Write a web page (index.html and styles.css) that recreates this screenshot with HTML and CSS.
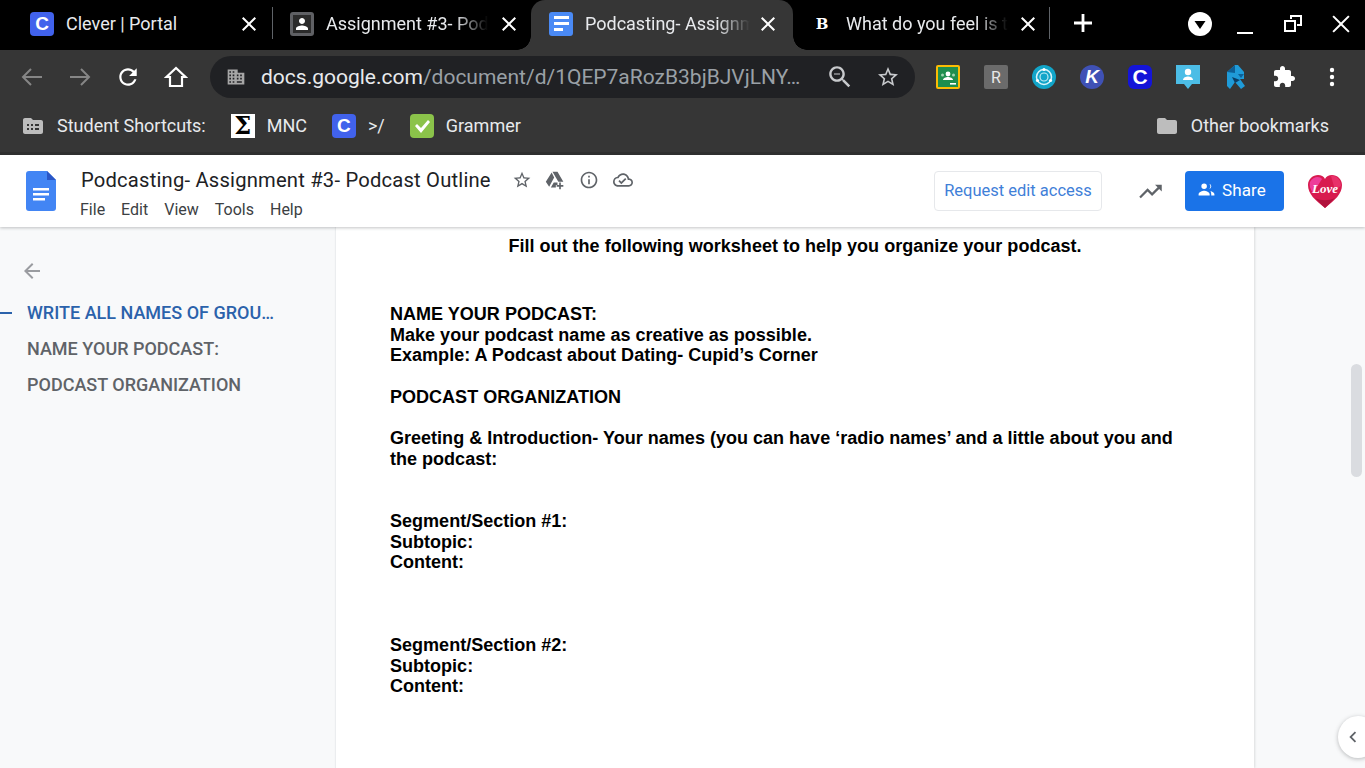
FILE: index.html
```html
<!DOCTYPE html>
<html lang="en">
<head>
<meta charset="utf-8">
<title>Podcasting- Assignment #3- Podcast Outline</title>
<link rel="stylesheet" href="styles.css">
</head>
<body>
<svg class="defs" aria-hidden="true">
  <symbol id="i-close" viewBox="0 0 24 24"><path d="M19 6.41L17.59 5 12 10.59 6.41 5 5 6.41 10.59 12 5 17.59 6.41 19 12 13.41 17.59 19 19 17.59 13.41 12z"/></symbol>
  <symbol id="i-star" viewBox="0 0 24 24"><path d="M22 9.24l-7.19-.62L12 2 9.19 8.63 2 9.24l5.46 4.73L5.82 21 12 17.27 18.18 21l-1.63-7.03L22 9.24zM12 15.4l-3.76 2.27 1-4.28-3.32-2.88 4.38-.38L12 6.1l1.71 4.04 4.38.38-3.32 2.88 1 4.28L12 15.4z"/></symbol>
  <symbol id="i-folder" viewBox="0 0 24 24"><path d="M10 4H4c-1.1 0-1.99.9-1.99 2L2 18c0 1.1.9 2 2 2h16c1.1 0 2-.9 2-2V8c0-1.1-.9-2-2-2h-8l-2-2z"/></symbol>
  <symbol id="i-person" viewBox="0 0 24 24"><path d="M12 12c2.21 0 4-1.79 4-4s-1.79-4-4-4-4 1.79-4 4 1.79 4 4 4zm0 2c-2.67 0-8 1.34-8 4v2h16v-2c0-2.66-5.33-4-8-4z"/></symbol>
</svg>

<div class="tabstrip">
  <div class="tab tab-one">
    <span class="fav fav-clever">C</span>
    <span class="tab-title">Clever | Portal</span>
    <svg class="tab-x"><use href="#i-close"/></svg>
  </div>
  <i class="tab-sep"></i>
  <div class="tab tab-two">
    <span class="fav fav-class"><svg viewBox="0 0 24 24"><use href="#i-person"/></svg></span>
    <span class="tab-title fade">Assignment #3- Podcast Outline</span>
    <svg class="tab-x"><use href="#i-close"/></svg>
  </div>
  <div class="tab tab-active">
    <span class="fav fav-docs"><i></i><i></i><i class="short"></i></span>
    <span class="tab-title fade">Podcasting- Assignment #3</span>
    <svg class="tab-x"><use href="#i-close"/></svg>
  </div>
  <div class="tab tab-four">
    <span class="fav fav-b">B</span>
    <span class="tab-title fade">What do you feel is the best</span>
    <svg class="tab-x"><use href="#i-close"/></svg>
  </div>
  <i class="tab-sep"></i>
  <svg class="newtab" viewBox="0 0 24 24"><path d="M10.6 3h2.8v7.6H21v2.8h-7.6V21h-2.8v-7.6H3v-2.8h7.6z"/></svg>
  <div class="winctl">
    <svg class="win-drop" viewBox="0 0 24 24"><circle cx="12" cy="12" r="12" fill="#fff"/><path d="M6.500 9h11L12 17z" fill="#000"/></svg>
    <svg class="win-btn" viewBox="0 0 24 24"><path d="M4 20h16v2H4z" fill="#fff"/></svg>
    <svg class="win-btn" viewBox="0 0 24 24"><path d="M9 3h12v11h-5v-2h3V5h-8v2H9zM3 8h12v12H3zm2 2v8h8v-8z" fill="#fff" fill-rule="evenodd"/></svg>
    <svg class="win-btn" viewBox="0 0 24 24"><path d="M20.600 4.800 19.200 3.400 12 10.600 4.800 3.400 3.400 4.800l7.200 7.200-7.200 7.200 1.400 1.400 7.200-7.200 7.200 7.200 1.400-1.400-7.200-7.200z" fill="#fff"/></svg>
  </div>
</div>

<div class="toolbar">
  <svg class="nav line dim" viewBox="0 0 24 24"><path d="M22 12H3M11 4l-8 8 8 8"/></svg>
  <svg class="nav line dim" viewBox="0 0 24 24"><path d="M2 12h19M13 4l8 8-8 8"/></svg>
  <svg class="nav" viewBox="1 1 22 22"><path d="M17.650 6.350C16.200 4.900 14.210 4 12 4c-4.420 0-7.990 3.580-7.990 8s3.570 8 7.990 8c3.730 0 6.840-2.550 7.730-6h-2.080c-.82 2.330-3.040 4-5.650 4-3.310 0-6-2.690-6-6s2.690-6 6-6c1.660 0 3.140.69 4.220 1.780L13 11h7V4l-2.350 2.350z"/></svg>
  <svg class="nav line home" viewBox="0 0 24 24"><path d="M12 3 2.500 12H6v9h12v-9h3.500z"/></svg>
  <div class="omnibox">
    <svg class="site" viewBox="0 0 24 24"><path d="M2 3h12v4h8v14H2zm2 2v2h2V5zm4 0v2h2V5zM4 9v2h2V9zm4 0v2h2V9zM4 13v2h2v-2zm4 0v2h2v-2zM4 17v2h2v-2zm4 0v2h2v-2zm5-8v2h2V9zm4 0v2h2V9zm-4 4v2h2v-2zm4 0v2h2v-2zm-4 4v2h6v-2z" fill-rule="evenodd"/></svg>
    <span class="url"><b>docs.google.com</b>/document/d/1QEP7aRozB3bjBJVjLNY…</span>
    <svg class="omni-ic" viewBox="2 2 20 20"><path d="M15.500 14h-.79l-.28-.27C15.410 12.590 16 11.110 16 9.500 16 5.910 13.090 3 9.500 3S3 5.910 3 9.500 5.910 16 9.500 16c1.610 0 3.090-.59 4.230-1.570l.27.28v.79l5 4.990L20.490 19l-4.990-5zm-6 0C7.010 14 5 11.990 5 9.500S7.010 5 9.500 5 14 7.010 14 9.500 11.990 14 9.500 14zM7 9h5v1H7z"/></svg>
    <svg class="omni-ic"><use href="#i-star"/></svg>
  </div>
  <div class="exts">
    <svg class="ext" viewBox="0 0 24 24"><rect width="24" height="24" rx="2" fill="#fbbc04"/><rect x="2" y="2" width="20" height="20" fill="#1e8e4e"/><circle cx="12" cy="9" r="2.400" fill="#fff"/><circle cx="6.500" cy="10" r="1.500" fill="#9fd4b0"/><circle cx="17.500" cy="10" r="1.500" fill="#9fd4b0"/><path d="M7 15c0-2 3-3 5-3s5 1 5 3z" fill="#fff"/><path d="M14 18h6v1.600h-6z" fill="#fff"/></svg>
    <span class="ext ext-r">R</span>
    <svg class="ext" viewBox="0 0 24 24"><circle cx="12" cy="12" r="12" fill="#12a5c9"/><circle cx="12" cy="12" r="7.500" fill="none" stroke="#d9f4fa" stroke-width="1.500"/><circle cx="12" cy="12" r="4" fill="none" stroke="#bfeaf4" stroke-width="1.200"/><circle cx="12" cy="4.500" r="1.600" fill="#fff"/><circle cx="5.500" cy="15.500" r="1.600" fill="#fff"/><circle cx="18.500" cy="15.500" r="1.600" fill="#fff"/></svg>
    <span class="ext ext-k">K</span>
    <span class="ext ext-c">C</span>
    <svg class="ext" viewBox="0 0 24 24"><path d="M0 0h24v19h-8l-4 5-4-5H0z" fill="#4cbde6"/><circle cx="12" cy="7" r="3.200" fill="#fff"/><path d="M7 15c0-2.600 3-3.600 5-3.600s5 1 5 3.600z" fill="#fff"/></svg>
    <svg class="ext" viewBox="0 0 24 24"><path d="M11 0h3l6 7v7l-4 0 5 7-4 3-6-7-5 7-3-3V7z" fill="#1f9bd8"/><path d="M3 7l8-7 0 8zM14 9l6 0-3 4z" fill="#0d5f96"/><path d="M8 12l8 3-5 3z" fill="#0a3e66"/></svg>
    <svg class="ext ext-tool" viewBox="0 0 24 24"><path d="M20.500 11H19V7c0-1.100-.9-2-2-2h-4V3.500C13 2.120 11.880 1 10.500 1S8 2.120 8 3.500V5H4c-1.100 0-1.990.9-1.990 2v3.800H3.500c1.490 0 2.700 1.210 2.700 2.700s-1.210 2.700-2.700 2.700H2V20c0 1.100.9 2 2 2h3.800v-1.500c0-1.490 1.210-2.700 2.700-2.700 1.490 0 2.700 1.210 2.700 2.700V22H17c1.100 0 2-.9 2-2v-4h1.500c1.380 0 2.500-1.120 2.500-2.500S21.880 11 20.500 11z"/></svg>
    <svg class="ext ext-tool" viewBox="0 0 24 24"><circle cx="12" cy="5" r="2.200"/><circle cx="12" cy="12" r="2.200"/><circle cx="12" cy="19" r="2.200"/></svg>
  </div>
</div>

<div class="bookmarks">
  <div class="bm">
    <svg class="bm-ic" viewBox="0 0 24 24"><path d="M10 4H4c-1.100 0-2 .9-2 2v12c0 1.100.9 2 2 2h16c1.100 0 2-.9 2-2V8c0-1.100-.9-2-2-2h-8zM6 10h2v2H6zm4 0h2v2h-2zm4 0h4v2h-4zM6 14h2v2H6zm4 0h2v2h-2zm4 0h4v2h-4z" fill-rule="evenodd"/></svg>
    <span>Student Shortcuts:</span>
  </div>
  <div class="bm"><span class="fav fav-sigma">Σ</span><span>MNC</span></div>
  <div class="bm"><span class="fav fav-clever">C</span><span>&gt;/</span></div>
  <div class="bm">
    <svg class="fav" viewBox="0 0 24 24"><rect width="24" height="24" rx="4" fill="#8bc34a"/><path d="M5 12l2-2 4 4 7-8 2 2-9 11z" fill="#fff"/></svg>
    <span>Grammer</span>
  </div>
  <div class="bm bm-other">
    <svg class="bm-ic"><use href="#i-folder"/></svg>
    <span>Other bookmarks</span>
  </div>
</div>

<header class="docbar">
  <svg class="docs-logo" viewBox="0 0 30 40"><path d="M3 0h18l9 9v28a3 3 0 0 1-3 3H3a3 3 0 0 1-3-3V3a3 3 0 0 1 3-3z" fill="#4285f4"/><path d="M21 0l9 9h-9z" fill="#2a56c6"/><path d="M7 17h16v2.400H7zm0 5h16v2.400H7zm0 5h12v2.400H7z" fill="#fff"/></svg>
  <div class="doc-meta">
    <div class="doc-title-row">
      <h1 class="doc-title">Podcasting- Assignment #3- Podcast Outline</h1>
      <svg class="doc-ic"><use href="#i-star"/></svg>
      <svg class="doc-ic" viewBox="0 0 24 24"><path d="M9 2h6l7 12h-6zM8 3l3 6-6 11-4-6zM7 21l3.500-6H15v3h-2v3z"/><path d="M17 15h2v3h3v2h-3v3h-2v-3h-3v-2h3z"/></svg>
      <svg class="doc-ic" viewBox="0 0 24 24"><path d="M11 7h2v2h-2zm0 4h2v6h-2zm1-9C6.480 2 2 6.480 2 12s4.480 10 10 10 10-4.480 10-10S17.520 2 12 2zm0 18c-4.410 0-8-3.590-8-8s3.590-8 8-8 8 3.590 8 8-3.590 8-8 8z"/></svg>
      <svg class="doc-ic" viewBox="0 0 24 24"><path d="M19.350 10.040C18.670 6.590 15.640 4 12 4 9.110 4 6.600 5.640 5.350 8.040 2.340 8.360 0 10.910 0 14c0 3.310 2.690 6 6 6h13c2.760 0 5-2.240 5-5 0-2.640-2.050-4.780-4.650-4.960zM19 18H6c-2.210 0-4-1.790-4-4 0-2.050 1.530-3.760 3.560-3.970l1.070-.11.5-.95C8.080 7.140 9.940 6 12 6c2.620 0 4.880 1.860 5.390 4.430l.3 1.500 1.530.11c1.560.1 2.780 1.410 2.780 2.960 0 1.650-1.350 3-3 3zm-9-3.820l-2.090-2.090L6.500 13.500 10 17l6.010-6.010-1.410-1.410z"/></svg>
    </div>
    <nav class="doc-menu"><span>File</span><span>Edit</span><span>View</span><span>Tools</span><span>Help</span></nav>
  </div>
  <div class="doc-actions">
    <button class="btn-request">Request edit access</button>
    <svg class="trend" viewBox="0 0 24 24"><path d="M16 6l2.290 2.290-4.880 4.880-4-4L2 16.590 3.410 18l6-6 4 4 6.300-6.290L22 12V6z"/></svg>
    <button class="btn-share"><svg class="share-ic" viewBox="0 0 24 24"><path d="M9 11.500a3.500 3.500 0 1 0 0-7 3.500 3.500 0 0 0 0 7zM2 18c0-2.700 4.700-4.500 7-4.500s7 1.800 7 4.500v1.500H2zM15.500 11.300a3.400 3.400 0 0 0 0-6.600 5 5 0 0 1 0 6.600zM17 13.800c1.900.6 5 1.900 5 4.200v1.500h-4V18c0-1.700-.4-3.100-1-4.200z"/></svg>Share</button>
    <svg class="avatar" viewBox="0 0 36 36">
      <path d="M18 35C8 27 1 21 1 12 1 6 6 2 11 2c3 0 6 1.500 7 4 1-2.500 4-4 7-4 5 0 10 4 10 10 0 9-7 15-17 23z" fill="#d81b4f"/>
      <path d="M3 9c3-6 10-6 12-3L6 20C3 16 2 12 3 9z" fill="#ee3d9a"/>
      <path d="M24 3c5-1 10 4 10 10l-6 4z" fill="#e8316a"/>
      <path d="M8 25c6 3 14 3 20 0l-10 10z" fill="#b0123c"/>
      <text x="18" y="20" class="avatar-text">Love</text>
    </svg>
  </div>
</header>

<main class="workspace">
  <aside class="outline">
    <svg class="outline-back" viewBox="0 0 24 24"><path d="M20 11H7.830l5.590-5.590L12 4 4 12l8 8 1.410-1.410L7.830 13H20v-2z"/></svg>
    <div class="outline-item active">WRITE ALL NAMES OF GROU…</div>
    <div class="outline-item">NAME YOUR PODCAST:</div>
    <div class="outline-item">PODCAST ORGANIZATION</div>
  </aside>
  <article class="page">
    <p class="lead">Fill out the following worksheet to help you organize your podcast.</p>
    <p>NAME YOUR PODCAST:</p>
    <p>Make your podcast name as creative as possible.</p>
    <p>Example: A Podcast about Dating- Cupid’s Corner</p>
    <p class="gap1">PODCAST ORGANIZATION</p>
    <p class="gap1">Greeting &amp; Introduction- Your names (you can have ‘radio names’ and a little about you and the podcast:</p>
    <p class="gap2">Segment/Section #1:</p>
    <p>Subtopic:</p>
    <p>Content:</p>
    <p class="gap3">Segment/Section #2:</p>
    <p>Subtopic:</p>
    <p>Content:</p>
  </article>
  <div class="rightgutter"></div>
  <div class="scrollthumb"></div>
  <div class="sidepanel-toggle"><svg viewBox="0 0 24 24"><path d="M15.400 7.400 14 6l-6 6 6 6 1.400-1.400L10.800 12z"/></svg></div>
</main>
</body>
</html>
```
FILE: styles.css
```css
* { box-sizing: border-box; }
html, body { margin: 0; height: 768px; overflow: hidden; }
body { font-family: Roboto, "Liberation Sans", sans-serif; background: #fff; width: 1365px; }
.defs { display: none; }

/* tab strip */
.tabstrip { height: 50px; background: #000; display: flex; align-items: center; color: #e8eaed; }
.tab { height: 50px; display: flex; align-items: center; flex: none; font-size: 18px; position: relative; padding-bottom: 3px; }
.tab-one { width: 272px; padding-left: 30px; }
.tab-two { width: 258px; padding-left: 17px; }
.tab-active { width: 262px; padding-left: 18px; background: #363636; border-radius: 14px 14px 0 0; }
.tab-four { width: 256px; padding-left: 17px; }
.tab-active::before, .tab-active::after { content: ""; position: absolute; bottom: 0; width: 14px; height: 14px; }
.tab-active::before { left: -14px; background: radial-gradient(circle at 0 0, transparent 13.5px, #363636 14px); }
.tab-active::after { right: -14px; background: radial-gradient(circle at 100% 0, transparent 13.5px, #363636 14px); }
.tab-sep { width: 1px; height: 32px; background: #5f6368; flex: none; margin-bottom: 4px; }
.fav { width: 24px; height: 24px; flex: none; display: flex; align-items: center; justify-content: center; }
.tab-title { margin-left: 12px; white-space: nowrap; overflow: hidden; flex: none; }
.tab-one .tab-title { width: 168px; }
.tab-two .tab-title { width: 162px; }
.tab-active .tab-title { width: 165px; }
.tab-four .tab-title { width: 162px; }
.fade { -webkit-mask-image: linear-gradient(90deg, #000 80%, transparent 100%); mask-image: linear-gradient(90deg, #000 80%, transparent 100%); }
.tab-x { width: 24px; height: 24px; fill: #fff; flex: none; margin-left: 3px; }
.tab-two .tab-x { margin-left: 9px; }
.tab-active .tab-x { margin-left: 6px; }
.tab-four .tab-x { margin-left: 8px; }
.fav-clever { background: #4162ec; color: #fff; border-radius: 4px; font: 700 19px "Liberation Sans", sans-serif; }
.fav-class { background: #5f6064; border-radius: 3px; padding: 3px; fill: #fff; }
.fav-class svg { width: 18px; height: 18px; background: #2b2b2b; }
.fav-docs { background: #4a8af5; border-radius: 3px; flex-direction: column; align-items: flex-start; gap: 3px; padding-left: 5px; }
.fav-docs i { display: block; width: 15px; height: 3px; background: #fff; }
.fav-docs i.short { width: 9px; }
.fav-b { font: 700 15px "DejaVu Serif", serif; color: #fff; }
.newtab { width: 24px; height: 24px; fill: #fff; margin-left: 21px; flex: none; margin-bottom: 4px; }
.winctl { margin-left: auto; display: flex; align-items: center; gap: 24px; padding-right: 12px; padding-bottom: 2px; }
.winctl svg { width: 24px; height: 24px; flex: none; }
.winctl .win-drop { margin-right: -3px; }

/* toolbar */
.toolbar { height: 52px; background: #363636; display: flex; align-items: center; padding-left: 20px; padding-top: 2px; }
.nav { width: 24px; height: 24px; fill: #fff; flex: none; margin-right: 24px; }
.nav.line { fill: none; stroke: #fff; stroke-width: 2; }
.nav.dim { stroke: #868686; }
.nav.home { stroke-width: 2.200; }
.omnibox { width: 705px; height: 42px; margin-left: -2px; flex: none; border-radius: 21px; background: #202124; display: flex; align-items: center; padding-left: 16px; padding-right: 15px; }
.site { width: 20px; height: 20px; fill: #a6a6a6; flex: none; }
.url { margin-left: 15px; font-size: 21px; color: #9aa0a6; white-space: nowrap; flex: 1; }
.url b { font-weight: 400; color: #e8eaed; }
.omni-ic { width: 24px; height: 24px; fill: #c8cacd; flex: none; margin-left: 24px; }
.exts { display: flex; align-items: center; gap: 24px; margin-left: 21px; }
.ext { width: 24px; height: 24px; flex: none; display: flex; align-items: center; justify-content: center; }
.ext-r { background: #6b6b6b; color: #e8e8e8; border-radius: 2px; font-size: 16px; }
.ext-k { background: #3f51b5; color: #fff; border-radius: 50%; font: italic 700 19px "Liberation Sans", sans-serif; }
.ext-c { background: #1414d8; color: #fff; border-radius: 6px; font: 700 21px "Liberation Sans", sans-serif; }
.ext-tool { fill: #fff; }

/* bookmarks */
.bookmarks { height: 53px; background: #363636; border-bottom: 3px solid #2f2f2f; display: flex; align-items: center; font-size: 18px; color: #e8eaed; padding-bottom: 3px; padding-left: 21px; }
.bm { display: flex; align-items: center; gap: 12px; margin-right: 25px; flex: none; white-space: nowrap; }
.bm-ic { width: 24px; height: 24px; fill: #bdbdbd; flex: none; }
.bm-other { margin-left: auto; margin-right: 36px; }
.fav-sigma { background: #fff; color: #000; font: 700 24px "DejaVu Serif", serif; }

/* docs header */
.docbar { height: 72px; background: #fff; display: flex; align-items: center; padding-left: 26px; box-shadow: 0 1px 3px rgba(60,64,67,.3); position: relative; z-index: 2; }
.docs-logo { width: 30px; height: 40px; flex: none; }
.doc-meta { margin-left: 25px; display: flex; flex-direction: column; padding-top: 3px; }
.doc-title-row { display: flex; align-items: center; height: 30px; padding-top: 1px; }
.doc-title { margin: 0; font: 400 20.200px Roboto, sans-serif; color: #202124; white-space: nowrap; letter-spacing: .2px; margin-right: 21px; }
.doc-ic { width: 20px; height: 20px; fill: #5f6368; flex: none; margin-right: 13.700px; margin-top: 1px; }
.doc-menu { display: flex; gap: 16px; font-size: 16px; color: #3c4043; margin-top: 3px; height: 24px; align-items: center; margin-left: -1px; }
.doc-actions { margin-left: auto; display: flex; align-items: center; padding-right: 22px; }
.btn-request { width: 168px; height: 40px; background: #fff; border: 1px solid #e6e8eb; border-radius: 4px; color: #3f80d8; font: 400 16.500px Roboto, sans-serif; padding: 0 0 1px; }
.trend { width: 27px; height: 27px; fill: #5f6368; margin-left: 35px; flex: none; }
.btn-share { width: 99px; height: 40px; margin-left: 21px; background: #1a73e8; border: 0; border-radius: 4px; color: #fff; font: 400 17px Roboto, sans-serif; letter-spacing: .1px; display: flex; align-items: center; justify-content: center; gap: 6px; padding: 0 6px 3px 0; }
.share-ic { width: 19px; height: 19px; fill: #fff; flex: none; }
.avatar { width: 36px; height: 36px; margin-left: 23px; flex: none; }
.avatar-text { font: italic 700 13px "Liberation Serif", serif; fill: #fff; text-anchor: middle; }

/* workspace */
.workspace { height: 541px; display: flex; overflow: hidden; position: relative; background: #f8f9fa; }
.outline { width: 335px; flex: none; padding-top: 32px; }
.outline-back { display: block; width: 24px; height: 24px; fill: #9a9ca0; margin-left: 20px; margin-bottom: 12px; }
.outline-item { height: 36px; line-height: 36px; padding-left: 27px; font-size: 18px; font-weight: 500; color: #5f6368; white-space: nowrap; position: relative; }
.outline-item.active { color: #2b62ab; }
.outline-item.active::before { content: ""; position: absolute; left: 0; top: 17px; width: 12px; height: 2px; background: #2b62ab; }
.page { width: 919px; flex: none; background: #fff; border-left: 1px solid #ebedef; padding: 8.700px 54px 0; box-shadow: 1px 0 2px rgba(60,64,67,.15); font: 700 18.040px/20.700px "Liberation Sans", Arial, sans-serif; color: #000; }
.page p { margin: 0; }
.page .lead { text-align: center; margin-bottom: 47.500px; }
.page .gap1 { margin-top: 20.700px; }
.page .gap2 { margin-top: 41.400px; }
.page .gap3 { margin-top: 62.100px; }
.rightgutter { flex: 1; }
.scrollthumb { position: absolute; left: 1351px; top: 137px; width: 11px; height: 113px; border-radius: 6px; background: #dadce0; }
.sidepanel-toggle { position: absolute; left: 1338px; top: 489px; width: 40px; height: 42px; border-radius: 50%; background: #fff; box-shadow: 0 1px 4px rgba(60,64,67,.35); display: flex; align-items: center; padding-left: 4px; }
.sidepanel-toggle svg { width: 22px; height: 22px; fill: #5f6368; }
```
